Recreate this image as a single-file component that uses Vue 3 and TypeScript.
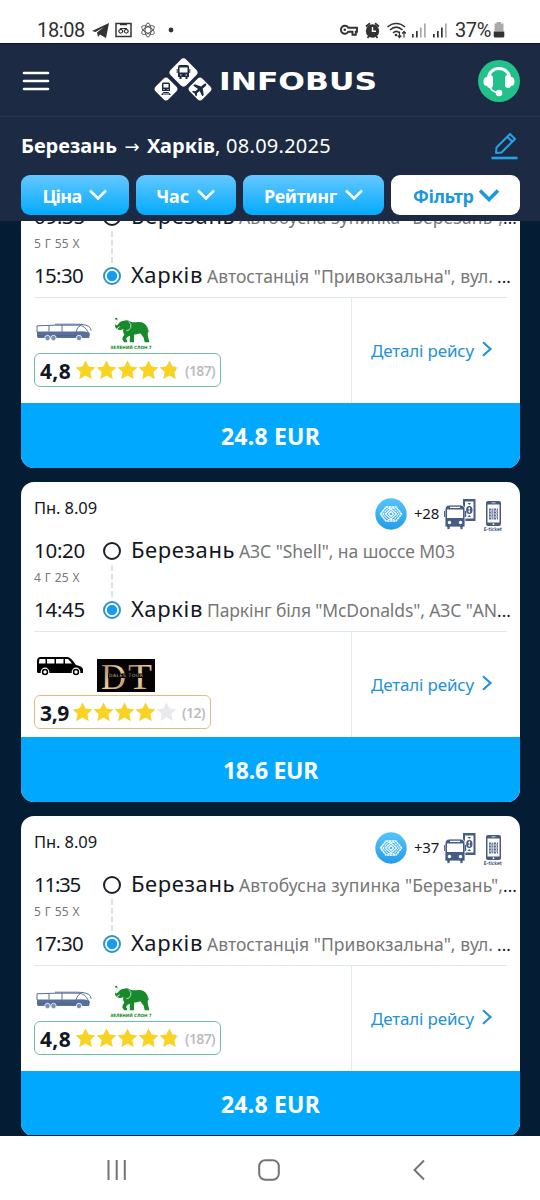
<script setup lang="ts">
import type { Directive } from 'vue'

interface Stop {
  time: string
  timeWidth: number
  city: string
  cityWidth: number
  address: string
  addressWidth: number
  clipped: boolean
  gap: number
}

interface Trip {
  id: number
  date: string
  extra: string
  duration: string
  from: Stop
  to: Stop
  vehicle: 'coach' | 'van'
  rating: string
  stars: number[]
  reviews: string
  reviewsWidth: number
  price: string
  priceWidth: number
}

/* Adjusts tracking so that a label takes up the given width. */
const vFit: Directive<HTMLElement, number> = {
  mounted(el, { value }) {
    const natural = el.getBoundingClientRect().width
    const count = (el.textContent ?? '').length
    el.style.letterSpacing = `${((value - natural) / count).toFixed(3)}px`
  },
}

const busStop = 'Автобусна зупинка "Березань",'
const mainStation = 'Автостанція "Привокзальна", вул.'

function coachTrip(id: number, start: string, end: string): Trip {
  return {
    id,
    date: 'Пн. 8.09',
    extra: '+37',
    duration: '5 Г 55 Х',
    from: { time: start, timeWidth: id === 3 ? 46 : 51, city: 'Березань', cityWidth: 104, address: busStop, addressWidth: 264, clipped: true, gap: 0 },
    to: { time: end, timeWidth: 49, city: 'Харків', cityWidth: 72, address: mainStation, addressWidth: 286, clipped: true, gap: 4 },
    vehicle: 'coach',
    rating: '4,8',
    stars: [1, 1, 1, 1, 0.82],
    reviews: '(187)',
    reviewsWidth: 30,
    price: '24.8 EUR',
    priceWidth: 99,
  }
}

const trips: Trip[] = [
  coachTrip(1, '09:35', '15:30'),
  {
    id: 2,
    date: 'Пн. 8.09',
    extra: '+28',
    duration: '4 Г 25 Х',
    from: { time: '10:20', timeWidth: 51, city: 'Березань', cityWidth: 104, address: 'АЗС "Shell", на шоссе М03', addressWidth: 216, clipped: false, gap: 0 },
    to: { time: '14:45', timeWidth: 51, city: 'Харків', cityWidth: 72, address: 'Паркінг біля "McDonalds", АЗС "AN', addressWidth: 290, clipped: true, gap: 0 },
    vehicle: 'van',
    rating: '3,9',
    stars: [1, 1, 1, 1, 0],
    reviews: '(12)',
    reviewsWidth: 23,
    price: '18.6 EUR',
    priceWidth: 95,
  },
  coachTrip(3, '11:35', '17:30'),
]

const filters = [
  { label: 'Ціна', width: 39, cls: 'price' },
  { label: 'Час', width: 33, cls: 'time' },
  { label: 'Рейтинг', width: 73, cls: 'rate' },
  { label: 'Фільтр', width: 61, cls: 'all' },
]
</script>

<template>
  <div class="screen">
    <div class="status">
      <span v-fit="48" class="clock">18:08</span>
      <svg class="status-left" width="84" height="20" viewBox="0 0 84 20">
        <path d="M0 11 17 3 14 18 8 14.500 6 17 5 12.500 12 7 3.500 12Z" fill="#333" />
        <rect x="24" y="3.500" width="15" height="13" fill="none" stroke="#333" stroke-width="1.500" />
        <path d="M28 4.500h7" stroke="#333" stroke-width="1.500" />
        <path d="M28 8.500h7M30.500 10.500a1.900 1.900 0 1 1-3.500 0 1.900 1.900 0 0 1 3.500 0M36 10.500a1.900 1.900 0 1 1-3.500 0 1.900 1.900 0 0 1 3.500 0" fill="none" stroke="#333" stroke-width="1.200" />
        <g fill="none" stroke="#555" stroke-width="1">
          <ellipse cx="56" cy="10" rx="3" ry="7" />
          <ellipse cx="56" cy="10" rx="3" ry="7" transform="rotate(60 56 10)" />
          <ellipse cx="56" cy="10" rx="3" ry="7" transform="rotate(-60 56 10)" />
        </g>
        <circle cx="79" cy="10" r="2.400" fill="#333" />
      </svg>
      <svg class="status-right" width="112" height="20" viewBox="0 0 112 20">
        <path d="M9.300 7.700H18v4.100h-1.200v3h-3.300v-3H9.300a4 4 0 1 1 0-4.100Z" fill="none" stroke="#333" stroke-width="1.900" />
        <circle cx="5.800" cy="9.800" r="1.300" fill="#333" />
        <circle cx="33.500" cy="11" r="6.700" fill="#333" />
        <path d="M27 6.500 31 3.300M40 6.500 36 3.300M28.500 18l1.500-2M38.500 18 37 16" stroke="#333" stroke-width="1.800" />
        <path d="M33.500 7v4.300h3.500" fill="none" stroke="#fff" stroke-width="1.400" />
        <g fill="none" stroke="#333" stroke-width="1.500">
          <path d="M48.500 7c5-4.800 12.500-4.800 17.500 0M51 10c4-3.700 8.500-3.700 12.500 0M54 13c2-2 4.500-2 6.500 0" />
          <path d="M60.500 11.500v6m-1.800-2 1.800 2 1.800-2M65 17.500v-6m-1.800 2 1.800-2 1.800 2" stroke-width="1.200" />
        </g>
        <circle cx="57" cy="15" r="1.300" fill="#333" />
        <g fill="#333">
          <rect x="73" y="14" width="1.700" height="3.500" /><rect x="77" y="11" width="1.700" height="6.500" />
          <rect x="94" y="14" width="1.700" height="3.500" /><rect x="98" y="11" width="1.700" height="6.500" /><rect x="102" y="7.500" width="1.700" height="10" />
        </g>
        <g fill="#aaa">
          <rect x="81" y="7.500" width="1.700" height="10" /><rect x="85" y="3.500" width="1.700" height="14" /><rect x="106" y="3.500" width="1.700" height="14" />
        </g>
      </svg>
      <span v-fit="36" class="charge">37%</span>
      <svg class="battery" width="12" height="18" viewBox="0 0 12 18">
        <path d="M3.500 1h4.500v2h-4.500zM1.500 2.500h9v8h-9z" fill="#aaa" />
        <path d="M.7 10.500h10.600V15q0 1.500-1.500 1.500H2.200Q.7 16.500.7 15z" fill="#333" />
      </svg>
    </div>

    <header class="header">
      <div class="brand-bar">
        <svg class="menu" width="28" height="22" viewBox="0 0 28 22">
          <path d="M2 3h24M2 11h24M2 19h24" stroke="#fff" stroke-width="2.600" stroke-linecap="round" />
        </svg>
        <svg class="logo" width="226" height="46" viewBox="0 0 226 46">
          <g fill="#fff">
            <rect x="18.500" y="4.500" width="22" height="22" rx="4" transform="rotate(45 29.500 15.500)" />
            <rect x="3" y="23" width="18" height="18" rx="3.500" transform="rotate(45 12 32)" />
            <rect x="37" y="23" width="18" height="18" rx="3.500" transform="rotate(45 46 32)" />
          </g>
          <g fill="#1c2b43">
            <path d="M24 10q0-2 2-2h7q2 0 2 2v10h-1.500v2h-2v-2h-4v2h-2v-2H24zM22.700 12h1v4h-1zM35.300 12h1v4h-1z" />
            <path d="M8 27q0-1.500 1.500-1.500h5Q16 25.500 16 27v7H8zM9.500 35h5l2.500 3H7z" />
          </g>
          <path d="M25.500 10.500h8v5h-8zM9.500 27h5v3.500h-5z" fill="#fff" />
          <path d="M26 18h1.500M31.500 18H33M9.500 32.500h1M13.500 32.500h1M9 37h6" stroke="#fff" />
          <path transform="translate(46 32) rotate(50)" d="M0-8q1.300 0 1.300 2v3.500L7 1v2L1.300 1.500V5L3 6.500V8L0 7l-3 1V6.500L-1.300 5V1.500L-7 3V1l5.700-3.500V-6Q-1.300-8 0-8Z" fill="#1c2b43" />
          <text x="65" y="32.500" textLength="158" lengthAdjust="spacingAndGlyphs">INFOBUS</text>
        </svg>
        <svg class="support" width="42" height="42" viewBox="0 0 42 42">
          <circle cx="21" cy="21" r="21" fill="#22c08a" />
          <path d="M10.500 19C10.500 5 31.500 5 31.500 19" fill="none" stroke="#fff" stroke-width="3.200" />
          <rect x="9" y="15" width="6" height="13" rx="3" fill="#fff" />
          <rect x="27" y="15" width="6" height="13" rx="3" fill="#fff" />
          <path d="M9 17q-3.500 0-3.500 4.500T9 26zM33 17q3.500 0 3.500 4.500T33 26z" fill="#fff" />
          <path d="M12 27q2 5 8 5.500" fill="none" stroke="#fff" stroke-width="1.500" />
          <circle cx="21" cy="33" r="3.300" fill="#fff" />
        </svg>
      </div>

      <div class="search">
        <div class="query">
          <b v-fit="96">Березань</b><i>→</i><b v-fit="68">Харків</b><span v-fit="116">, 08.09.2025</span>
        </div>
        <svg class="edit" width="28" height="30" viewBox="0 0 28 30">
          <path d="M6.500 16.500 20 3l5 5L11.500 21.500 6 22ZM17.500 6l4.500 4.500" fill="none" stroke="#27a1e4" stroke-width="2" stroke-linejoin="round" />
          <path d="M1.500 27h26" stroke="#27a1e4" stroke-width="2.600" />
        </svg>
      </div>

      <div class="filters">
        <button v-for="f in filters" :key="f.cls" :class="['filter', f.cls]">
          <span v-fit="f.width">{{ f.label }}</span>
          <svg v-if="f.cls !== 'all'" width="18" height="12" viewBox="0 0 18 12"><path d="m1 1.500 8 8 8-8" fill="none" stroke="#fff" stroke-width="2.600" /></svg>
          <svg v-else width="20" height="13" viewBox="0 0 20 13"><path d="m1 1.500 9 9 9-9" fill="none" stroke="#1c98e0" stroke-width="3.600" /></svg>
        </button>
      </div>
    </header>

    <main class="results">
      <article v-for="trip in trips" :key="trip.id" class="card">
        <div class="top">
          <span v-fit="63" class="date">{{ trip.date }}</span>
          <div class="perks">
            <svg width="32" height="32" viewBox="0 0 32 32">
              <defs>
                <linearGradient id="perk" x1="0" y1="0" x2="0" y2="1">
                  <stop offset="0" stop-color="#55c5fb" /><stop offset="1" stop-color="#249ce8" />
                </linearGradient>
              </defs>
              <circle cx="16" cy="16" r="15.700" fill="url(#perk)" />
              <g fill="none" stroke="#fff" stroke-width="1.100">
                <path d="M5.500 16 11 9h10l5.500 7L21 23H11Z" stroke-width="1.500" stroke-dasharray="2.500 .4" />
                <path d="M8 16l5-5.500h6L24 16l-5 5.500h-6Z" stroke-dasharray="2 .5" />
                <path d="M10.500 16 16 11l5.500 5-5.500 5Z" />
                <path d="M13.500 16 16 13.500l2.500 2.500-2.500 2.500Z" />
              </g>
            </svg>
            <span v-fit="25" class="extra">{{ trip.extra }}</span>
            <svg class="pay" width="33" height="32" viewBox="0 0 33 32">
              <rect x="19" y="1" width="12.500" height="22" fill="#485c83" />
              <path d="M21 3.500h8.500v17H21z" fill="#fff" />
              <ellipse cx="25.300" cy="12" rx="3.200" ry="4" fill="#485c83" />
              <path d="M25.300 9v6M24.200 10.500h2M24.200 13.500h2" stroke="#fff" stroke-width=".8" />
              <path d="M23.500 5h3.500l-1.700 2zM23.500 19h3.500l-1.700-2z" fill="#485c83" />
              <path d="M1 12q0-5 5-5h10q5 0 5 5v17h-2v2.500h-3V29H6v2.500H3V29H1z" fill="#485c83" stroke="#fff" stroke-width=".8" />
              <path d="M.2 13v6M21.500 13v6" stroke="#485c83" stroke-width="1.400" />
              <path d="M3 11.500h16V20H3zM6 8.700h10v1.200H6z" fill="#fff" />
              <circle cx="5.500" cy="24.500" r="1.700" fill="#fff" /><circle cx="16.500" cy="24.500" r="1.700" fill="#fff" />
            </svg>
            <svg class="eticket" width="20" height="32" viewBox="0 0 20 32">
              <rect x="3" y="1" width="15" height="25" rx="2" fill="#485c83" />
              <rect x="4.500" y="4.500" width="12" height="18" fill="#fff" />
              <path d="M6 9.500h9M6 12.500h9M6 15.500h9M6 18.500h9" stroke="#5d6f93" stroke-width="1.800" stroke-dasharray="2.400 .8 1 .6" />
              <path d="M6 11h9M6 14h9M6 17h9" stroke="#5d6f93" stroke-width="1.200" stroke-dasharray="1 1.200 2 .8" />
              <path d="M8.500 2.800h4" stroke="#fff" stroke-width=".7" /><circle cx="10.500" cy="24.200" r=".9" fill="#fff" />
              <text x=".8" y="30.800" textLength="18" lengthAdjust="spacingAndGlyphs">E-ticket</text>
            </svg>
          </div>
        </div>

        <div class="route">
          <div class="stop">
            <span class="hour"><span v-fit="trip.from.timeWidth">{{ trip.from.time }}</span></span>
            <span class="dot" />
            <span v-fit="trip.from.cityWidth" class="city">{{ trip.from.city }}</span>
            <span v-fit="trip.from.addressWidth" class="address">{{ trip.from.address }}</span>
            <span v-if="trip.from.clipped" v-fit="14" class="more">...</span>
          </div>
          <div class="leg">
            <span class="duration"><span v-fit="46">{{ trip.duration }}</span></span>
            <span class="dash" />
          </div>
          <div class="stop">
            <span class="hour"><span v-fit="trip.to.timeWidth">{{ trip.to.time }}</span></span>
            <span class="dot active" />
            <span v-fit="trip.to.cityWidth" class="city">{{ trip.to.city }}</span>
            <span v-fit="trip.to.addressWidth" class="address">{{ trip.to.address }}</span>
            <span v-if="trip.to.clipped" v-fit="14" class="more" :style="{ marginLeft: `${trip.to.gap}px` }">...</span>
          </div>
        </div>

        <div class="info">
          <div class="carrier">
            <div v-if="trip.vehicle === 'coach'" class="logos">
              <svg class="coach" width="58" height="20" viewBox="0 0 58 20">
                <path d="M1 8.500h38q8-1 14 1l1 1.500-1 4H2.500Q1 15 1 13z" fill="#586f9b" />
                <path d="M1 9V2.800l18-.6M13 2.500V8.500M26 1.800v7M19 1.200h22q11 0 13.500 4l.6 2.500M19 2.200h24q6 .3 9.500 7.500M40 9q1-5 4.500-6.500" fill="none" stroke="#586f9b" stroke-width="1" />
                <path d="M1 12.800h40" stroke="#455b86" stroke-width=".7" />
                <g fill="#7d8db0" stroke="#fff" stroke-width=".8"><circle cx="11.500" cy="15" r="2.700" /><circle cx="17.500" cy="15" r="2.700" /><circle cx="43" cy="15" r="2.700" /></g>
              </svg>
              <svg class="elephant" width="42" height="33" viewBox="332 262 126 99">
                <path d="M347 266l6-2q4 7-2 13-5 6-2 10 4 1 8-4 5-9 17-10 9-3 19 3 11 3 23 1 20-1 27 14 5 12 2 24l5 23h-14l-3-14-10-13q-8 4-18 3l-1 12v12h-13l1-20q-10 3-12 10l4 6-1 4h-8l-6-8q-1-8 6-15-6-8-3-17-9 5-18 1-10-6-6-16 5-6 5-11-1-4-4-2-3-1-2-4z" fill="#188a2c" />
                <path d="M388 276q10 7 6 18-4 10-13 9" fill="none" stroke="#fff" stroke-width="2" />
                <path d="m361 291-9 7" stroke="#fff" stroke-width="2.500" />
                <path d="m443 293 6 15" stroke="#188a2c" stroke-width="2" />
                <text x="333" y="357" textLength="124" lengthAdjust="spacingAndGlyphs">ЗЕЛЕНИЙ СЛОН 7</text>
              </svg>
            </div>
            <div v-else class="logos">
              <svg class="van" width="48" height="20" viewBox="0 0 48 20">
                <path d="M1 5q0-4 4-4h26q3 0 6 4l3 4q6 1 7 4v4H2q-1 0-1-2z" fill="#000" />
                <path d="M3.500 3h6v4.500H2.800zM11 3h7.500v4.500H11zM20 3h7.500v4.500H20zM29 3h3l4 4.500h-7z" fill="#fff" />
                <g fill="#000" stroke="#fff" stroke-width="1.200"><circle cx="9" cy="16" r="3.800" /><circle cx="40" cy="16" r="3.800" /></g>
                <circle cx="9" cy="16" r="1.700" fill="#fff" /><circle cx="40" cy="16" r="1.700" fill="#fff" />
              </svg>
              <svg class="dt" width="58" height="33" viewBox="0 0 58 33">
                <defs>
                  <linearGradient id="gold" x1="0" y1="0" x2="1" y2="1">
                    <stop offset="0" stop-color="#8c5c3c" /><stop offset=".5" stop-color="#f0cfa2" /><stop offset="1" stop-color="#a8794d" />
                  </linearGradient>
                </defs>
                <rect width="58" height="33" fill="#050304" />
                <text class="mono" x="4" y="30" textLength="25" lengthAdjust="spacingAndGlyphs" fill="url(#gold)">D</text>
                <text class="mono" x="31" y="30" textLength="24" lengthAdjust="spacingAndGlyphs" fill="url(#gold)">T</text>
                <rect x="11" y="14.500" width="36" height="4.500" fill="#050304" />
                <text class="tour" x="12" y="18.300" textLength="34">DALES TOUR</text>
              </svg>
            </div>
            <div :class="['rating', trip.vehicle]">
              <b v-fit="trip.vehicle === 'coach' ? 31 : 29">{{ trip.rating }}</b>
              <div class="stars">
                <svg v-for="(fill, i) in trip.stars" :key="i" width="21" height="20" viewBox="0 0 21 20">
                  <defs><clipPath :id="`s${trip.id}-${i}`"><rect width="21" height="20" :transform="`scale(${fill} 1)`" /></clipPath></defs>
                  <path d="m10.500.5 3 6 6.800.9-5 4.600 1.400 6.900-6.200-3.400-6.200 3.400L5.700 12 .700 7.400 7.500 6.500Z" fill="#e9e9eb" />
                  <path d="m10.500.5 3 6 6.800.9-5 4.600 1.400 6.900-6.200-3.400-6.200 3.400L5.700 12 .700 7.400 7.500 6.500Z" fill="#f9d322" :clip-path="`url(#s${trip.id}-${i})`" />
                </svg>
              </div>
              <span v-fit="trip.reviewsWidth" class="reviews">{{ trip.reviews }}</span>
            </div>
          </div>
          <div class="details">
            <span v-fit="103">Деталі рейсу</span>
            <svg width="12" height="16" viewBox="0 0 12 16"><path d="m2 1.200 7.500 6.800L2 14.800" fill="none" stroke="#2492d6" stroke-width="2.200" /></svg>
          </div>
        </div>

        <button class="buy"><span v-fit="trip.priceWidth">{{ trip.price }}</span></button>
      </article>
    </main>

    <nav class="nav">
      <svg width="20" height="22" viewBox="0 0 20 22"><path d="M1.500 1v20M9.700 1v20M17.800 1v20" stroke="#747474" stroke-width="2" /></svg>
      <svg class="home" width="22" height="22" viewBox="0 0 22 22"><rect x="1.200" y="1.200" width="19.600" height="19.600" rx="6" fill="none" stroke="#747474" stroke-width="2" /></svg>
      <svg width="14" height="22" viewBox="0 0 14 22"><path d="M12 1.500 2.500 11l9.500 9.500" fill="none" stroke="#747474" stroke-width="2" /></svg>
    </nav>
  </div>
</template>

<style>
body {
  margin: 0;
}
</style>

<style scoped>
.screen {
  width: 540px;
  height: 1200px;
  display: flex;
  flex-direction: column;
  overflow: hidden;
  background: #051c35;
  color: #121722;
  font-family: "Noto Sans", "Open Sans", sans-serif;
  white-space: nowrap;
}
svg {
  display: block;
  flex: none;
}
span, b {
  flex: none;
}
button {
  border: 0;
  margin: 0;
  padding: 0;
  font-family: inherit;
}
.status {
  height: 44px;
  flex: none;
  box-sizing: border-box;
  padding: 17px 0 0 37px;
  display: flex;
  align-items: flex-start;
  background: #fff;
  border-bottom: 1px solid #0b1729;
  font-family: Roboto, sans-serif;
  font-size: 20px;
  line-height: 27px;
  color: #303030;
}
.status-left {
  margin: 3px 0 0 7px;
}
.status-right {
  margin: 3px 0 0 163px;
}
.charge {
  margin-left: 4px;
}
.battery {
  margin: 4px 0 0 2px;
}
.header {
  flex: none;
  height: 177px;
  background: #1c2b43;
}
.brand-bar {
  height: 73px;
  box-sizing: border-box;
  padding: 0 20px 0 22px;
  display: flex;
  align-items: center;
  border-bottom: 1px solid #26364e;
}
.menu {
  margin-top: 2px;
}
.logo {
  margin-left: 104px;
}
.logo text {
  font: 700 25px "DejaVu Sans", sans-serif;
  fill: #fff;
}
.support {
  margin-left: auto;
  margin-top: 2px;
}
.search {
  height: 58px;
  box-sizing: border-box;
  padding: 0 21px;
  display: flex;
  align-items: center;
  justify-content: space-between;
  color: #fff;
}
.query {
  display: flex;
  align-items: baseline;
  margin-top: -2px;
  font-size: 20px;
}
.query i {
  width: 30px;
  text-align: center;
  font: 18px "DejaVu Sans", sans-serif;
}
.edit {
  margin-right: 1px;
}
.filters {
  padding: 0 20px 0 21px;
  display: flex;
  gap: 7px;
}
.filter {
  height: 40px;
  border-radius: 9px;
  display: flex;
  align-items: center;
  justify-content: center;
  gap: 8px;
  background: linear-gradient(#64c8ff, #03aaff);
  color: #fff;
  font-size: 18px;
  line-height: 26px;
  font-weight: 700;
}
.filter span {
  margin-top: 1px;
}
.filter.price { width: 108px; }
.filter.time { width: 100px; }
.filter.rate { width: 142px; }
.filter.all {
  width: 129px;
  gap: 5px;
  background: #fff;
  color: #1c98e0;
}
.results {
  height: 915px;
  flex: none;
  overflow: hidden;
  display: flex;
  flex-direction: column;
  padding: 0 20px 0 21px;
  border-bottom: 1px solid #051c35;
  box-sizing: border-box;
}
.card {
  flex: none;
  height: 320px;
  margin-bottom: 14px;
  display: flex;
  flex-direction: column;
  border-radius: 13px;
  overflow: hidden;
  background: #fff;
}
.card:first-child {
  margin-top: -73px;
}
.top {
  height: 55px;
  display: flex;
  justify-content: space-between;
  padding: 0 17px 0 13px;
}
.date {
  font-size: 16.500px;
  line-height: 24px;
  margin-top: 14px;
}
.perks {
  display: flex;
  align-items: flex-start;
  margin-top: 16px;
}
.extra {
  margin: 3px 0 0 7px;
  font-size: 15px;
  line-height: 24px;
}
.pay {
  margin-left: 5px;
}
.eticket {
  margin: 2px 0 0 6px;
}
.eticket text {
  font: 700 5px "DejaVu Sans", sans-serif;
  fill: #485c83;
}
.route {
  height: 94px;
  margin: 0 13px;
  border-bottom: 1px solid #dce8f4;
}
.stop {
  display: flex;
  height: 24px;
  line-height: 24px;
  align-items: baseline;
}
.hour {
  width: 69px;
  font-size: 20.500px;
}
.dot {
  width: 18px;
  height: 18px;
  box-sizing: border-box;
  align-self: center;
  margin: 4px 10px 0 0;
  border: 2px solid #1b1f28;
  border-radius: 50%;
}
.dot.active {
  border: 2.500px solid #2d93d2;
  background: radial-gradient(circle, #129df2 0 4.700px, #fff 5.500px);
}
.city {
  font-size: 22px;
}
.address {
  margin-left: 4px;
  font-size: 17.500px;
  color: #777;
}
.more {
  font-size: 17px;
}
.leg {
  height: 35px;
  display: flex;
}
.duration {
  width: 77px;
  font-size: 12px;
  line-height: 34px;
  color: #777;
}
.dash {
  height: 32px;
  margin-top: 4px;
  border-left: 2px dashed #dbe3ea;
}
.info {
  height: 106px;
  display: flex;
}
.carrier {
  width: 331px;
  box-sizing: border-box;
  border-right: 1px solid #e3ebf2;
  padding-left: 13px;
}
.logos {
  display: flex;
  align-items: flex-start;
}
.coach {
  margin: 25px 0 0 2px;
}
.elephant {
  margin: 19px 0 0 16px;
}
.elephant text {
  font: 700 13px "DejaVu Sans", sans-serif;
  fill: #188a2c;
}
.van {
  margin: 24px 0 0 2px;
}
.dt {
  margin: 27px 0 0 13px;
}
.mono {
  font: 36px "Liberation Serif", serif;
}
.tour {
  font: 4.500px "DejaVu Sans", sans-serif;
  fill: #c9b299;
}
.rating {
  display: flex;
  align-items: center;
  box-sizing: border-box;
  height: 34px;
  padding-left: 5px;
  border: 1px solid;
  border-radius: 6px;
}
.rating.coach {
  width: 187px;
  margin: 3px 0 0;
  border-color: #6fbfa5;
}
.rating.van {
  width: 177px;
  margin: 3px 0 0;
  border-color: #dfbd82;
}
.rating b {
  font-size: 21px;
  line-height: 32px;
  margin-top: 2px;
}
.stars {
  display: flex;
  margin-left: 4px;
}
.van .stars {
  margin-left: 3px;
}
.reviews {
  margin: 1px 0 0 5px;
  color: #bcbcc0;
  font-size: 14px;
  font-weight: 600;
}
.details {
  display: flex;
  align-items: center;
  padding-left: 19px;
  gap: 7px;
  color: #2492d6;
  font-size: 17px;
}
.details svg {
  margin-top: -2px;
}
.buy {
  height: 65px;
  background: #00a9ff;
  color: #fff;
  font-size: 23px;
  font-weight: 700;
  padding-top: 1px;
}
.nav {
  flex: 1;
  background: #fff;
  display: flex;
  align-items: center;
  padding: 4px 114px 0 107px;
  justify-content: space-between;
}
.home {
  margin-right: 2px;
}
</style>
